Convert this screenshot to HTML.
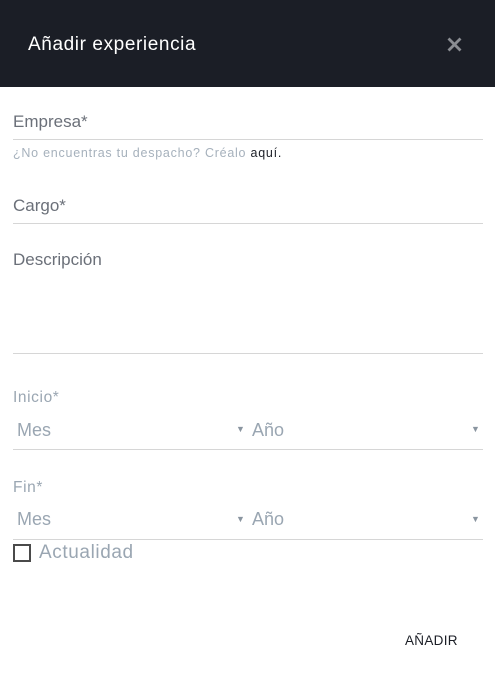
<!DOCTYPE html>
<html><head><meta charset="utf-8"><style>
body{margin:0;width:495px;height:677px;background:#fff;position:relative;overflow:hidden;font-family:"Liberation Sans",sans-serif}
.a{position:absolute;white-space:nowrap}
.hd{position:absolute;left:0;top:0;width:495px;height:87px;background:#1b1e26}
.ln{position:absolute;left:13px;width:470px;height:1px;background:#d6d6d6}
.ph{color:#6b7079;font-size:17px}
.gr{color:#9aa6b2;font-size:17px}
.tri{color:#8a95a0;font-size:9px}
</style></head><body>
<div class="hd"></div>
<div class="a" style="left:28px;top:34px;color:#fff;font-size:19px;letter-spacing:0.6px">Añadir experiencia</div>
<svg class="a" style="left:447px;top:37px" width="15" height="15" viewBox="0 0 15 15"><path d="M1.5 1.5L13.5 13.5M13.5 1.5L1.5 13.5" stroke="#8a8d92" stroke-width="2.8"/></svg>
<div class="a ph" style="left:13px;top:112px">Empresa*</div>
<div class="ln" style="top:139px"></div>
<div class="a" style="left:13px;top:146px;font-size:12.5px;letter-spacing:0.75px;color:#a6b1bc">¿No encuentras tu despacho? Créalo <span style="color:#1b1e26">aquí.</span></div>
<div class="a ph" style="left:13px;top:196px">Cargo*</div>
<div class="ln" style="top:223px"></div>
<div class="a ph" style="left:13px;top:250px">Descripción</div>
<div class="ln" style="top:353px"></div>
<div class="a gr" style="left:13px;top:389px;font-size:15.5px;letter-spacing:0.6px">Inicio*</div>
<div class="a gr" style="left:17px;top:420px;font-size:18px">Mes</div>
<div class="a tri" style="left:236px;top:424px">▼</div>
<div class="a gr" style="left:252px;top:420px;font-size:18px">Año</div>
<div class="a tri" style="left:471px;top:424px">▼</div>
<div class="ln" style="top:449px"></div>
<div class="a gr" style="left:13px;top:479px;font-size:15.5px;letter-spacing:0.6px">Fin*</div>
<div class="a gr" style="left:17px;top:509px;font-size:18px">Mes</div>
<div class="a tri" style="left:236px;top:514px">▼</div>
<div class="a gr" style="left:252px;top:509px;font-size:18px">Año</div>
<div class="a tri" style="left:471px;top:514px">▼</div>
<div class="ln" style="top:539px"></div>
<div class="a" style="left:13px;top:544px;width:14px;height:14px;border:2px solid #4a4a4a"></div>
<div class="a gr" style="left:39px;top:542px;font-size:19px;letter-spacing:0.6px">Actualidad</div>
<div class="a" style="left:405px;top:633px;font-size:13.5px;color:#1b1e26;letter-spacing:0.3px">AÑADIR</div>
</body></html>
